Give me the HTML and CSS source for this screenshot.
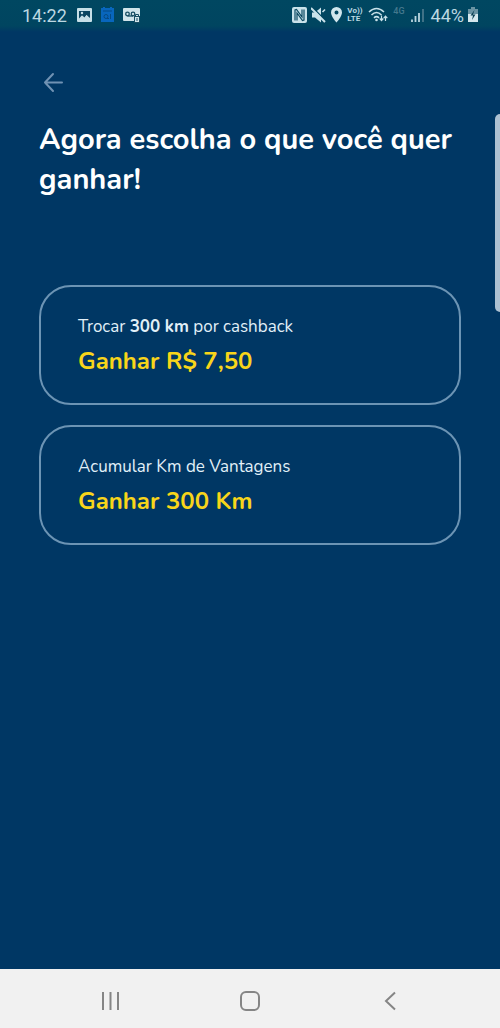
FILE: index.html
```html
<!DOCTYPE html>
<html lang="pt-BR">
<head>
<meta charset="utf-8">
<meta name="viewport" content="width=device-width, initial-scale=1">
<title>Escolha o que ganhar</title>
<link rel="stylesheet" href="styles.css">
</head>
<body>
<div class="screen">
  <header class="status">
    <div class="status-group status-left">
      <time class="clock">14:22</time>
      <svg width="15" height="15" viewBox="0 0 15 15"><rect x="0" y="0" width="15" height="14" rx="1" fill="#c5dfe7"/><path d="M2 10.500V3h11v7L9.500 7l-2 2.500L5 7.500z" fill="#0a4560"/><path d="M3 9.500l2-2 2.500 2.500 2-3L12 10z" fill="#c5dfe7"/><circle cx="5" cy="5" r="1.200" fill="#c5dfe7"/></svg>
      <svg width="15" height="16" viewBox="0 0 15 16"><path d="M1 1h2V0h2v1h5V0h2v1h2v14H1z" fill="#0866bd"/><path d="M3 4h9" stroke="#044a85"/><circle cx="6" cy="9.500" r="2" fill="none" stroke="#044a85"/><path d="M7 11.500h2M10.500 7v5" stroke="#044a85"/></svg>
      <svg width="18" height="15" viewBox="0 0 18 15"><rect width="17" height="13" rx="1" fill="#d0e4ea"/><circle cx="4.500" cy="6" r="1.800" fill="none" stroke="#174d62" stroke-width="1.300"/><circle cx="10" cy="6" r="1.800" fill="none" stroke="#174d62" stroke-width="1.300"/><path d="M4.500 8H10" stroke="#174d62" stroke-width="1.300"/><rect x="11.500" y="8.500" width="5" height="6" fill="#d0e4ea" stroke="#174d62"/><path d="M12.500 8V6.500h3V8" fill="none" stroke="#174d62"/><path d="M14 10v3" stroke="#174d62"/></svg>
    </div>
    <div class="status-group status-right">
      <svg width="15" height="16" viewBox="0 0 15 16"><rect width="15" height="16" rx="2" fill="#c9e2ea"/><path d="M3 13.500V3l1.500-.5L10 10V2.500M12 2.500V13l-1.500.5L5 6v7.500" fill="none" stroke="#0b4861" stroke-width="1.200"/></svg>
      <svg width="15" height="16" viewBox="0 0 15 16"><path d="M1 5.500h3l6-5v15l-6-5H1z" fill="#c9e2ea"/><path d="M1 0l14 14" stroke="#00455f" stroke-width="1.500"/><path d="M0 1l14 14" stroke="#c9e2ea" stroke-width="2"/><path d="M11.500 5l2.500-2.500" stroke="#c9e2ea" stroke-width="1.600"/></svg>
      <svg width="13" height="16" viewBox="0 0 13 16"><path fill-rule="evenodd" d="M6.500 0A5.500 5.500 0 0 0 1 5.500C1 9.500 6.500 15.500 6.500 15.500S12 9.500 12 5.500A5.500 5.500 0 0 0 6.500 0zm0 3.500a2 2 0 1 1 0 4 2 2 0 0 1 0-4z" fill="#d0e6ed"/></svg>
      <span class="volte"><span>Vo))</span><span>LTE</span></span>
      <svg class="wifi" width="20" height="16" viewBox="0 0 20 16"><path d="M1 5Q8.500-2 16 5M3.500 8Q8.500 3 13.500 8M6 10.800Q8.500 8.500 11 10.800" fill="none" stroke="#c9e2ea" stroke-width="1.600"/><circle cx="8.500" cy="13" r="1.300" fill="#c9e2ea"/><path d="M13.500 8.500V13M11.700 11.500l1.800 2 1.800-2M17.500 14V9.500M15.700 11.200l1.800-2 1.800 2" fill="none" stroke="#c9e2ea" stroke-width="1.200"/></svg>
      <span class="network">4G</span>
      <svg width="14" height="16" viewBox="0 0 14 16"><path d="M1 12.500V15M4.500 9v6M8 6v9" stroke="#b9d5df" stroke-width="1.800"/><path d="M12 2v13" stroke="#47778b" stroke-width="1.800"/></svg>
      <span class="percent">44%</span>
      <svg width="10" height="16" viewBox="0 0 10 16"><path d="M3 0h4v2h3v6H0V2h3z" fill="#6993a3"/><path d="M0 7h10v8H0z" fill="#d4e7ed"/><path d="M6.500 3L2.500 8.500H5L4 13 7.500 7.500H5z" fill="#0b4054"/></svg>
    </div>
  </header>

  <main class="content">
    <button class="back" type="button" aria-label="Voltar">
      <svg width="22" height="22" viewBox="0 0 22 22" fill="none" stroke="#7092b3" stroke-width="2" stroke-linecap="round" stroke-linejoin="round"><path d="M20 10.500H3M11 2L3 10.500l8 8.500"/></svg>
    </button>
    <h1 class="title">Agora escolha o que você quer ganhar!</h1>
    <div class="options">
      <button class="option" type="button">
        <span class="option-label">Trocar <strong>300 km</strong> por cashback</span>
        <span class="option-value">Ganhar R$ 7,50</span>
      </button>
      <button class="option" type="button">
        <span class="option-label">Acumular Km de Vantagens</span>
        <span class="option-value">Ganhar 300 Km</span>
      </button>
    </div>
  </main>
  <div class="edge-handle"></div>

  <nav class="navbar">
    <button type="button" aria-label="Recentes"><svg width="20" height="20" viewBox="0 0 20 20"><path d="M3 1v18M10.500 1v18M18 1v18" stroke="#858585" stroke-width="2"/></svg></button>
    <button type="button" aria-label="Início"><svg width="20" height="20" viewBox="0 0 20 20"><rect x="1" y="1" width="18" height="18" rx="5" fill="none" stroke="#858585" stroke-width="2"/></svg></button>
    <button type="button" aria-label="Voltar"><svg width="20" height="20" viewBox="0 0 20 20"><path d="M15 1.500L6 10l9 8.500" fill="none" stroke="#858585" stroke-width="2"/></svg></button>
  </nav>
</div>
</body>
</html>
```
FILE: styles.css
```css
* {
  box-sizing: border-box;
}

body {
  margin: 0;
  background: #003764;
  color: #fff;
  font-family: Nunito, "Open Sans", "Noto Sans", sans-serif;
}

button {
  margin: 0;
  padding: 0;
  border: 0;
  background: none;
  color: inherit;
  font: inherit;
  cursor: pointer;
}

svg {
  display: block;
  flex: none;
}

.screen {
  position: relative;
  display: flex;
  flex-direction: column;
  min-height: 100vh;
}

.status {
  display: flex;
  align-items: center;
  justify-content: space-between;
  height: 32px;
  padding: 0 22px 2px 22px;
  background: linear-gradient(#004761 0, #004560 26px, #003764 32px);
  color: #bcd8e2;
  font-family: Roboto, sans-serif;
  font-size: 18px;
}

.status-group {
  display: flex;
  align-items: center;
}

.status-left {
  gap: 8px;
}

.status-right {
  gap: 4px;
}

.clock {
  margin-right: 2px;
}

.volte {
  display: flex;
  flex-direction: column;
  width: 16px;
  font-size: 8px;
  font-weight: 700;
  line-height: 8px;
}

.wifi {
  margin-left: 1px;
}

.network {
  align-self: flex-start;
  margin: 0 2px 0 1px;
  color: #44788d;
  font-size: 9px;
  font-weight: 500;
  line-height: 12px;
}

.percent {
  margin-left: 2px;
}

.content {
  flex: 1;
  padding: 40px 39px 24px;
}

.back {
  display: block;
  padding: 0 3px;
}

.title {
  margin: 26px 0 0;
  font-size: 29px;
  font-weight: 700;
  line-height: 40px;
}

.options {
  display: flex;
  flex-direction: column;
  gap: 20px;
  margin-top: 85px;
}

.option {
  display: flex;
  flex-direction: column;
  gap: 7px;
  padding: 28px 37px 27px;
  border: 2px solid #6c94b4;
  border-radius: 32px;
  text-align: left;
}

.option-label {
  color: #e2f0f8;
  font-size: 17px;
  line-height: 24px;
}

.option-value {
  color: #f8d51a;
  font-size: 24px;
  font-weight: 700;
  line-height: 30px;
}

.edge-handle {
  position: absolute;
  top: 114px;
  right: 0;
  width: 5px;
  height: 198px;
  border-radius: 5px 0 0 5px;
  background: #adc1d2;
}

.navbar {
  display: flex;
  align-items: center;
  justify-content: space-around;
  height: 59px;
  padding: 5px 40px 0;
  background: #f1f1f1;
}

.navbar button {
  display: grid;
  place-items: center;
  width: 48px;
  height: 48px;
}
```
